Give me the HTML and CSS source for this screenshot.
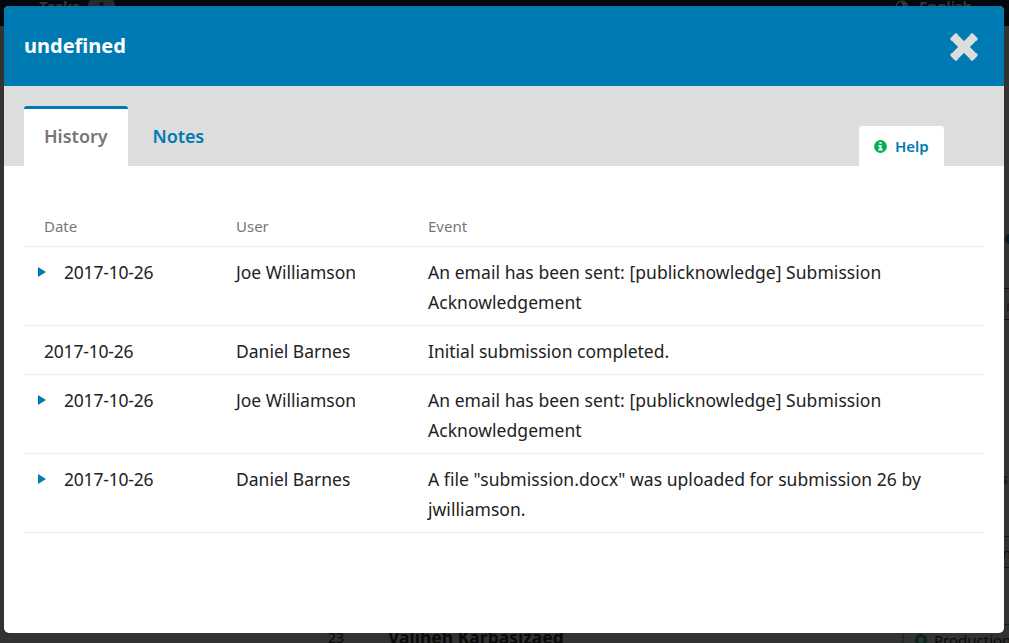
FILE: index.html
```html
<!DOCTYPE html>
<html lang="en">
<head>
<meta charset="utf-8">
<title>History</title>
<link rel="stylesheet" href="styles.css">
</head>
<body>
<div class="backdrop" aria-hidden="true">
  <div class="topbar"></div>
  <span class="bg tasks">Tasks</span><span class="bg count">1</span>
  <svg class="bg globe" viewBox="0 0 14 14"><circle cx="7" cy="7" r="6" fill="none" stroke="#333435" stroke-width="1.5"/><path d="M6 1l4 1 2 4-3 1-2-2zM2 8l3 1 1 3-2-1z" fill="#333435"/></svg>
  <span class="bg english">English</span>
  <div class="bg dot"></div>
  <div class="bg edge red"></div>
  <span class="bg red-letter">n</span>
  <span class="bg blue-letter">s</span>
  <div class="bg edge blue"></div>
  <span class="bg dark-letter">n</span>
  <span class="bg number">23</span>
  <span class="bg author">Valiheh Karbasizaed</span>
  <div class="bg stage"><i class="ring"></i>Production</div>
</div>
<section class="modal">
  <header class="modal-header">
    <h2 class="title">undefined</h2>
    <svg class="close" viewBox="0 0 28 28"><path d="M5.500 5.500L22.500 22.500M22.500 5.500L5.500 22.500" stroke="#ddd" stroke-width="8.200"/><path d="M6 2.600L2.600 6M22 2.600L25.400 6M2.600 22L6 25.400M25.400 22L22 25.400" stroke="#ddd" stroke-width="4.200" stroke-linecap="round"/></svg>
  </header>
  <nav class="tabs">
    <a class="tab active">History</a>
    <a class="tab">Notes</a>
    <a class="help"><svg class="info" viewBox="0 0 13 13"><circle cx="6.500" cy="6.500" r="6.400" fill="#00b24e"/><path d="M5.400 2h2.200v1.800H5.400zM4.300 5h3.300v4h1.100v1.500H4.300V9h1.100V6.500H4.300z" fill="#fff"/></svg>Help</a>
  </nav>
  <div class="table">
    <div class="row head"><span>Date</span><span>User</span><span>Event</span></div>
    <div class="row"><span class="date expand"><i class="arrow"></i>2017-10-26</span><span>Joe Williamson</span><span class="event">An email has been sent: [publicknowledge] Submission<br>Acknowledgement</span></div>
    <div class="row"><span class="date">2017-10-26</span><span>Daniel Barnes</span><span>Initial submission completed.</span></div>
    <div class="row"><span class="date expand"><i class="arrow"></i>2017-10-26</span><span>Joe Williamson</span><span class="event">An email has been sent: [publicknowledge] Submission<br>Acknowledgement</span></div>
    <div class="row"><span class="date expand"><i class="arrow"></i>2017-10-26</span><span>Daniel Barnes</span><span class="event">A file "submission.docx" was uploaded for submission 26 by<br>jwilliamson.</span></div>
  </div>
</section>
</body>
</html>
```
FILE: styles.css
```css
* { box-sizing: border-box; }
body {
  margin: 0;
  height: 643px;
  padding: 6px 5px 10px 4px;
  overflow: hidden;
  background: #323232;
  font-family: "Noto Sans", sans-serif;
  color: #222;
}
.backdrop { position: absolute; inset: 0; overflow: hidden; }
.topbar { height: 26px; background: #00070d; }
.bg { position: absolute; white-space: nowrap; }
.tasks { left: 39px; top: -4px; font: 700 15px/20px "Noto Sans", sans-serif; color: #333435; }
.count { left: 88px; top: -5px; width: 27px; height: 22px; border-radius: 11px; background: #252a2e; color: #080b0e; font: 700 13px/22px "Noto Sans", sans-serif; text-align: center; }
.globe { left: 895px; top: 0; width: 14px; height: 14px; }
.english { left: 919px; top: -4px; font: 700 15px/20px "Noto Sans", sans-serif; letter-spacing: -0.1px; color: #333435; }
.dot { left: 1005px; top: 234px; width: 10px; height: 10px; border-radius: 5px; background: #001d2b; }
.edge { left: 990px; width: 30px; height: 32px; border-top: 1px solid; border-bottom: 1px solid; }
.red { top: 288px; color: #3b0009; }
.blue { top: 536px; color: #00202f; }
.red-letter { left: 1006px; top: 295px; font-size: 15px; line-height: 20px; color: #27120a; }
.blue-letter { left: 1000px; top: 468px; font-size: 15px; font-weight: 700; line-height: 20px; color: #001e2e; }
.dark-letter { left: 1002px; top: 543px; font-size: 15px; line-height: 20px; color: #0a0a0a; }
.number { left: 328px; top: 628px; font-size: 14px; line-height: 20px; color: #090909; }
.author { left: 388px; top: 627px; font-size: 17.500px; font-weight: 700; line-height: 20px; color: #090909; }
.stage { left: 902px; top: 624px; width: 130px; height: 32px; padding-left: 12px; border: 1px solid #00281a; border-radius: 16px; display: flex; align-items: center; gap: 7px; font-size: 15px; color: #090909; }
.ring { width: 12px; height: 12px; border: 3px solid #00281a; border-radius: 50%; }

.modal { position: relative; height: 627px; border-radius: 5px; background: #fff; overflow: hidden; }
.modal-header { display: flex; justify-content: space-between; align-items: center; height: 80px; padding: 2px 26px 0 20px; background: #007ab2; }
.title { margin: 0 0 2px; font-size: 20px; font-weight: 700; line-height: 30px; color: #fff; }
.close { width: 28px; height: 28px; }
.tabs { display: flex; height: 80px; padding: 20px 60px 0 20px; background: #ddd; }
.tab { height: 60px; padding: 3px 24.500px 0; font-size: 18px; font-weight: 600; line-height: 54px; letter-spacing: -0.1px; color: #007ab2; }
.tab.active { width: 104px; padding: 0 20px; border-top: 3px solid #007ab2; border-radius: 3px 3px 0 0; background: #fff; letter-spacing: 0; color: #777; }
.help { display: flex; align-items: center; gap: 8px; width: 85px; height: 40px; margin: 20px 0 0 auto; padding-left: 15px; border-radius: 3px 3px 0 0; background: #fff; color: #007ab2; font-size: 15px; font-weight: 600; }
.info { width: 13px; height: 13px; }
.table { padding: 40px 20px 0; }
.row { display: grid; grid-template-columns: 192px 192px 1fr; padding: 10px 0 8px 20px; border-bottom: 1px solid #eee; font-size: 17.500px; line-height: 30px; }
.head { height: 41px; padding-top: 5px; font-size: 15px; color: #777; }
.date { letter-spacing: -0.2px; }
.event { letter-spacing: 0.05px; }
.expand { display: flex; }
.arrow { width: 8px; height: 10px; margin: 10px 18px 0 -6px; background: #007ab2; clip-path: polygon(0 0, 100% 50%, 0 100%); }
```
